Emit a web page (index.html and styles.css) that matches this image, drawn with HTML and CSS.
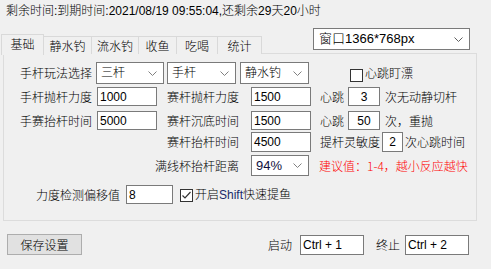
FILE: index.html
```html
<!DOCTYPE html>
<html lang="zh">
<head>
<meta charset="utf-8">
<link rel="stylesheet" href="styles.css">
</head>
<body>
<div class="app">
  <div class="title">剩余时间:到期时间:2021/08/19 09:55:04,还剩余29天20小时</div>
  <div class="tabrow">
    <div class="tabs">
      <div class="tab active t1">基础</div>
      <div class="tab t2">静水钓</div>
      <div class="tab t3">流水钓</div>
      <div class="tab t4">收鱼</div>
      <div class="tab t5">吃喝</div>
      <div class="tab t6">统计</div>
    </div>
    <div class="combo winsel"><span class="val">窗口1366*768px</span><svg class="chev" width="9" height="5" viewBox="0 0 9 5"><polyline points="0.5,0.5 4.5,4.5 8.5,0.5" fill="none" stroke="#606060" stroke-width="1"/></svg></div>
  </div>
  <div class="panel">
    <div class="row r1">
      <span class="lbl w76">手杆玩法选择</span>
      <div class="combo s1"><span class="val">三杆</span><svg class="chev" width="9" height="5" viewBox="0 0 9 5"><polyline points="0.5,0.5 4.5,4.5 8.5,0.5" fill="none" stroke="#808080" stroke-width="1"/></svg></div>
      <div class="combo s2"><span class="val">手杆</span><svg class="chev" width="9" height="5" viewBox="0 0 9 5"><polyline points="0.5,0.5 4.5,4.5 8.5,0.5" fill="none" stroke="#808080" stroke-width="1"/></svg></div>
      <div class="combo s3"><span class="val">静水钓</span><svg class="chev" width="9" height="5" viewBox="0 0 9 5"><polyline points="0.5,0.5 4.5,4.5 8.5,0.5" fill="none" stroke="#808080" stroke-width="1"/></svg></div>
      <span class="check cb1"></span><span class="lbl">心跳盯漂</span>
    </div>
    <div class="row r2">
      <span class="lbl w77">手杆抛杆力度</span>
      <span class="inp w60">1000</span>
      <span class="lbl w84 ml10">赛杆抛杆力度</span>
      <span class="inp w60">1500</span>
      <span class="lbl w28 ml9">心跳</span>
      <span class="inp c w32">3</span>
      <span class="lbl ml5">次无动静切杆</span>
    </div>
    <div class="row r3">
      <span class="lbl w77">手赛抬杆时间</span>
      <span class="inp w60">5000</span>
      <span class="lbl w84 ml10">赛杆沉底时间</span>
      <span class="inp w60">1500</span>
      <span class="lbl w28 ml9">心跳</span>
      <span class="inp c w32">50</span>
      <span class="lbl ml5">次，重抛</span>
    </div>
    <div class="row r4">
      <span class="lbl rcell">赛杆抬杆时间</span>
      <span class="inp w60">4500</span>
      <span class="lbl w62 ml9">提杆灵敏度</span>
      <span class="inp c w21">2</span>
      <span class="lbl ml2">次心跳时间</span>
    </div>
    <div class="row r5">
      <span class="lbl rcell">满线杯抬杆距离</span>
      <div class="combo s4"><span class="val">94%</span><svg class="chev" width="9" height="5" viewBox="0 0 9 5"><polyline points="0.5,0.5 4.5,4.5 8.5,0.5" fill="none" stroke="#808080" stroke-width="1"/></svg></div>
      <span class="lbl red ml10">建议值：1-4，越小反应越快</span>
    </div>
    <div class="row r6">
      <span class="lbl w90">力度检测偏移值</span>
      <span class="inp w47">8</span>
      <span class="check cb2"><svg width="11" height="11" viewBox="0 0 11 11"><polyline points="1.5,5.5 4,8 9.5,2" fill="none" stroke="#333" stroke-width="1.2"/></svg></span>
      <span class="lbl ml2">开启<span class="shift">Shift</span>快速提鱼</span>
    </div>
  </div>
  <div class="footer">
    <div class="btn">保存设置</div>
    <span class="lbl start">启动</span>
    <span class="inp hk">Ctrl + 1</span>
    <span class="lbl stop">终止</span>
    <span class="inp hk">Ctrl + 2</span>
  </div>
</div>
</body>
</html>
```
FILE: styles.css
```css
* { box-sizing: border-box; }
html, body { margin: 0; padding: 0; }
body {
  width: 491px;
  height: 269px;
  background: #f0f0f0;
  font-family: "Liberation Sans", "Noto Sans CJK SC", sans-serif;
  font-size: 12px;
  font-weight: 300;
  color: #000;
  overflow: hidden;
}
.app { display: flex; flex-direction: column; }
.title {
  height: 28px;
  padding: 3px 0 0 6px;
  line-height: 16px;
  font-size: 12px;
  white-space: nowrap;
}
.tabrow { display: flex; height: 25px; }
.tabs { display: flex; align-items: flex-end; margin-left: 1px; height: 26px; position: relative; z-index: 2; }
.tab {
  height: 18px;
  border: 1px solid #d9d9d9;
  border-bottom: none;
  border-left: none;
  display: flex;
  justify-content: center;
  align-items: center;
  font-family: "Noto Sans CJK SC", sans-serif;
  font-size: 12px;
  line-height: 14px;
  padding-top: 1px;
  background: #f0f0f0;
}
.tab.active {
  height: 21px;
  border-left: 1px solid #d9d9d9;
  align-items: flex-start;
  padding-top: 2px;
  margin-bottom: -1px;
}
.t1 { width: 43px; }
.t2 { width: 48px; }
.t3 { width: 47px; }
.t4 { width: 38px; }
.t5 { width: 41px; }
.t6 { width: 44px; }

.combo {
  display: flex;
  align-items: center;
  justify-content: space-between;
  background: #fff;
  border: 1px solid #7a7a7a;
  padding: 0 6px 0 4px;
  white-space: nowrap;
}
.combo .val { font-size: 12px; line-height: 14px; }
.winsel { width: 157px; height: 22px; margin: 0 0 0 51px; align-self: flex-start; padding-left: 5px; }
.winsel .val { font-size: 13px; }

.panel {
  margin-left: 3px;
  width: 474px;
  height: 168px;
  border: 1px solid #dcdcdc;
  padding-top: 8px;
  display: flex;
  flex-direction: column;
}
.row { display: flex; align-items: center; white-space: nowrap; }
.lbl { font-family: "Noto Sans CJK SC", sans-serif; font-size: 12px; line-height: 14px; }
.shift { font-family: "Liberation Sans", sans-serif; color: #1a2a6a; }
.r1 { height: 22px; padding-left: 16px; }
.r2 { height: 19px; padding-left: 16px; margin-top: 3px; }
.r3 { height: 19px; padding-left: 16px; margin-top: 5px; }
.r4 { height: 20px; padding-left: 16px; margin-top: 2px; }
.r5 { height: 21px; padding-left: 16px; margin-top: 3px; }
.r6 { height: 19px; padding-left: 32px; margin-top: 9px; }
.s1 { width: 68px; height: 22px; }
.s2 { width: 69px; height: 22px; margin-left: 3px; }
.s3 { width: 69px; height: 22px; margin-left: 4px; }
.s4 { width: 58px; height: 21px; }
.s4 .val { font-family: "Liberation Sans", sans-serif; font-size: 13px; color: #101040; }

.w28 { width: 28px; }
.w62 { width: 62px; }
.w76 { width: 76px; }
.w77 { width: 77px; }
.w84 { width: 84px; }
.w90 { width: 90px; }
.w21 { width: 21px; }
.w32 { width: 32px; }
.w47 { width: 47px; }
.w60 { width: 60px; }
.ml2 { margin-left: 2px; }
.ml5 { margin-left: 5px; }
.ml9 { margin-left: 9px; }
.ml10 { margin-left: 10px; }
.rcell { width: 231px; text-align: right; padding-right: 12px; }

.inp {
  display: flex;
  align-items: center;
  height: 100%;
  background: #fff;
  border: 1px solid #7a7a7a;
  padding: 0 2px;
  font-family: "Liberation Sans", sans-serif;
  font-size: 12px;
  line-height: 14px;
  font-weight: 400;
}
.inp.c { justify-content: center; }
.check {
  width: 13px;
  height: 13px;
  background: #fff;
  border: 1px solid #333;
  display: flex;
  align-items: center;
  justify-content: center;
}
.cb1 { margin-left: 41px; margin-right: 2px; margin-top: 4px; }
.cb2 { margin-left: 7px; margin-top: 2px; }
.red { color: #ff0000; }

.footer { display: flex; align-items: center; margin-top: 13px; height: 21px; }
.btn {
  width: 75px;
  height: 21px;
  margin-left: 7px;
  background: #e1e1e1;
  border: 1px solid #adadad;
  display: flex;
  align-items: center;
  justify-content: center;
  font-family: "Noto Sans CJK SC", sans-serif;
  font-size: 12px;
}
.start { margin-left: 186px; width: 32px; }
.stop { margin-left: 12px; width: 29px; }
.hk { width: 64px; height: 20px; }
```
